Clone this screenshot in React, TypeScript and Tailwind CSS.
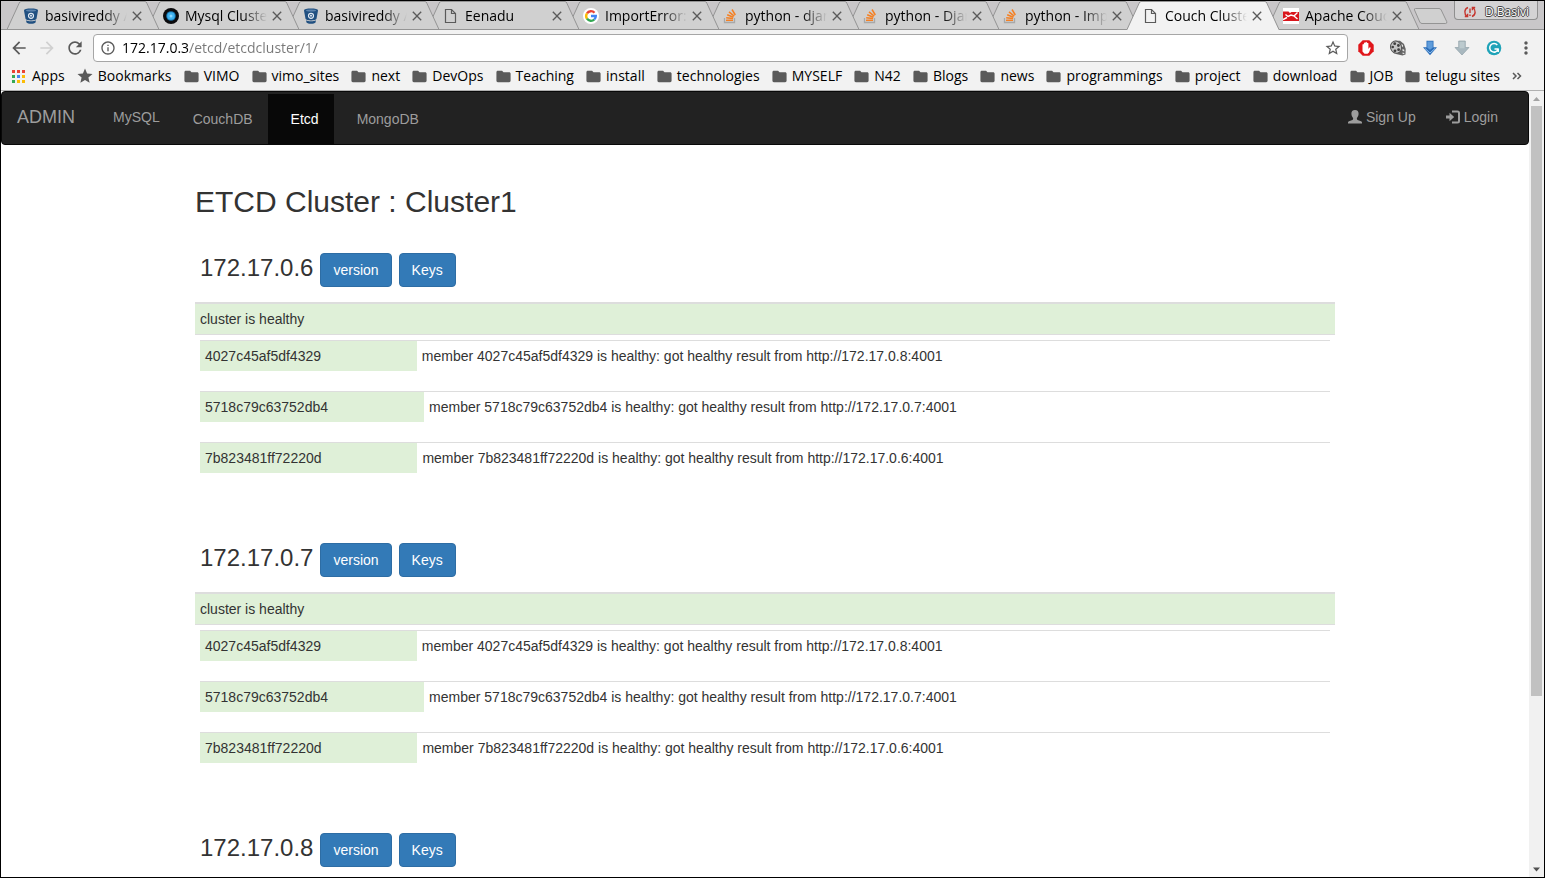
import React from "react";
import {
  MdArrowBack,
  MdArrowForward,
  MdClose,
  MdFolder,
  MdInfoOutline,
  MdMoreVert,
  MdRefresh,
  MdStar,
  MdStarBorder,
} from "react-icons/md";

type IconKind = "bitbucket" | "mysql" | "page" | "google" | "stack" | "couch";

const tabs: { title: string; icon: IconKind; active?: boolean }[] = [
  { title: "basivireddy /", icon: "bitbucket" },
  { title: "Mysql Cluste", icon: "mysql" },
  { title: "basivireddy /", icon: "bitbucket" },
  { title: "Eenadu", icon: "page" },
  { title: "ImportError:", icon: "google" },
  { title: "python - djan", icon: "stack" },
  { title: "python - Djan", icon: "stack" },
  { title: "python - Imp", icon: "stack" },
  { title: "Couch Cluste", icon: "page", active: true },
  { title: "Apache Couc", icon: "couch" },
];

const folders = [
  "VIMO", "vimo_sites", "next", "DevOps", "Teaching", "install", "technologies", "MYSELF",
  "N42", "Blogs", "news", "programmings", "project", "download", "JOB", "telugu sites",
];

const members = [
  { id: "4027c45af5df4329", host: "172.17.0.8" },
  { id: "5718c79c63752db4", host: "172.17.0.7" },
  { id: "7b823481ff72220d", host: "172.17.0.6" },
];

const nodes = ["172.17.0.6", "172.17.0.7", "172.17.0.8"];

function Favicon({ kind }: { kind: IconKind }) {
  switch (kind) {
    case "bitbucket":
      return (
        <svg viewBox="0 0 16 16" className="size-4">
          <path d="M1 2.600C1 1.200 4 .6 8 .6s7 .6 7 2l-1.500 8.200c-.4 1-2.600 1.600-5.500 1.600S2.900 11.800 2.500 10.800z" fill="#205081" />
          <ellipse cx="8" cy="2.500" rx="5" ry="1" fill="#5d84ad" />
          <path d="M3 12.200c1.200.8 3 1.100 5 1.100s3.800-.3 5-1.100l-.5 2.300c-.7.9-2.500 1.300-4.500 1.300s-3.800-.4-4.500-1.300z" fill="#205081" />
          <circle cx="8" cy="7.800" r="2.500" fill="none" stroke="#dfe8f2" strokeWidth="1.200" />
          <circle cx="8" cy="7.800" r="1" fill="#dfe8f2" />
        </svg>
      );
    case "mysql":
      return (
        <svg viewBox="0 0 16 16" className="size-4">
          <circle cx="8" cy="8" r="8" fill="#0b0b0d" />
          <circle cx="8" cy="8" r="4.800" fill="#1a75ad" />
          <circle cx="8" cy="8" r="3.800" fill="#3fb2f0" />
          <circle cx="8" cy="8" r="1.500" fill="#8ad8ff" />
        </svg>
      );
    case "page":
      return (
        <svg viewBox="0 0 16 16" className="size-4" fill="none" stroke="#5a5a5a" strokeWidth="1.200">
          <path d="M2.500 1.500h6L12.500 5.500v9h-10z" />
          <path d="M8.500 1.500v4h4" />
        </svg>
      );
    case "google":
      return (
        <svg viewBox="0 0 16 16" className="size-4">
          <circle cx="8" cy="8" r="8" fill="#fff" />
          <g fill="none" strokeWidth="2.400">
            <path d="M4 5.300A4.800 4.800 0 0 1 11.500 4.700" stroke="#ea4335" />
            <path d="M4 10.700A4.800 4.800 0 0 1 4 5.300" stroke="#fbbc05" />
            <path d="M11.300 11.500A4.800 4.800 0 0 1 4 10.700" stroke="#34a853" />
            <path d="M8 8h4.800a4.800 4.800 0 0 1-1.500 3.500" stroke="#4285f4" />
          </g>
        </svg>
      );
    case "stack":
      return (
        <svg viewBox="0 0 16 16" className="size-4" fill="none">
          <path d="M1.500 10v4.500h10V10" stroke="#a8a8a8" strokeWidth="1.300" />
          <g stroke="#f48024" strokeWidth="1.500">
            <path d="M3 12.300h7" />
            <path d="M3.200 9.700l6.900.9" />
            <path d="M4.200 6.800l6.200 2.500" />
            <path d="M6 3.900l5.200 4.200" />
            <path d="M9 1.500l3.300 5.500" />
          </g>
        </svg>
      );
    default:
      return (
        <svg viewBox="0 0 16 16" className="size-4">
          <path d="M0 0h16v16H0z" fill="#fff" />
          <path d="M0 3.500h5.500l1.500 1.500 1.500-1H16V13H0z" fill="#d9161c" />
          <path d="M2.500 6.500l2.500 2 3-1.500 3 1 3.500-3.500M0 11.500l4-2M11 8l3.500 3" stroke="#fff" strokeWidth="1.400" fill="none" />
        </svg>
      );
  }
}

function Tab({ title, icon, active, order }: { title: string; icon: IconKind; active?: boolean; order: number }) {
  return (
    <div className="relative -ml-3 h-[29px] w-[152px]" style={{ zIndex: order }}>
      <svg viewBox="0 0 152 29" preserveAspectRatio="none" className="absolute inset-0 size-full">
        <path d="M0 29L12 2.500Q12.500 1 14 1H138Q139.500 1 140 2.500L152 29z" fill={active ? "#f2f2f2" : "#d0d0d0"} />
        <path
          d={active
            ? "M0 28.500L12 2.500Q12.500.5 14 .5H138Q139.500.5 140 2.500L152 28.500"
            : "M0 28.500L12 2.500Q12.500.5 14 .5H138Q139.500.5 140 2.500L152 28.500z"}
          fill="none"
          stroke="#949494"
        />
      </svg>
      <div className="relative flex h-full items-center pr-3.5 pl-4">
        <Favicon kind={icon} />
        <span className="ml-1.5 min-w-0 flex-1 overflow-hidden text-sm leading-5 whitespace-nowrap [mask-image:linear-gradient(to_right,#000_70%,transparent)]">
          {title}
        </span>
        <button type="button" aria-label="Close tab" className="ml-0.5 text-[#5a5a5a]">
          <MdClose className="size-4" />
        </button>
      </div>
    </div>
  );
}

function TabStrip() {
  return (
    <div className="flex h-[29px] items-start bg-[#c9c7c9] pl-[18px] shadow-[inset_0_-1px_0_#949494]">
      {tabs.map((tab, i) => (
        <Tab key={i} {...tab} order={tab.active ? 20 : tabs.length - i} />
      ))}
      <button type="button" aria-label="New tab" className="mt-1.5 -ml-1.5">
        <svg viewBox="0 0 36 18" className="h-[18px] w-9">
          <path d="M2.500 1.500H26q1.500 0 2.200 1.500l5.500 11.500q.6 2-1 2H9q-1.500 0-2.200-1.500L1.500 3q-.5-1.500 1-1.500z" fill="#d0d0d0" stroke="#949494" />
        </svg>
      </button>
      <button
        type="button"
        className="mr-1.5 ml-auto flex h-[19px] items-center gap-2 rounded-b border border-t-0 border-[#8f8f8f] bg-[#d4d3d4] px-2 pt-1 text-xs leading-4"
      >
        <svg viewBox="0 0 14 14" className="size-3.5" fill="none" stroke="#c5362e" strokeWidth="1.400">
          <path d="M5 2.500C1 4 1 9 4 11.500M1.800 11.500H4.600V8.800M9 11.500c4-1.500 4-6.500 1-9M12.200 2.500H9.400v2.700M7 3.500v4.500M7 9.500V11" />
        </svg>
        <span className="text-white [text-shadow:1px_0_#444,-1px_0_#444,0_1px_#444,0_-1px_#444]">D.Basivi</span>
      </button>
    </div>
  );
}

function Extensions() {
  return (
    <div className="flex items-center gap-4">
      <button type="button" aria-label="Ad blocker">
        <svg viewBox="0 0 16 16" className="size-4">
          <path d="M4.700.3h6.600l4.400 4.400v6.600l-4.400 4.400H4.700L.3 11.300V4.700z" fill="#e0161b" />
          <path d="M4.500 8V4.500q.8-1 1.400 0V3q.8-1 1.500 0v-.7q.8-.9 1.500 0V3.200q.8-.9 1.500 0V9l1-1.500q1-.5 1.300.4L11 12.500l-1.500 1.200h-3L4.500 11.500z" fill="#fff" />
        </svg>
      </button>
      <button type="button" aria-label="Video downloader">
        <svg viewBox="0 0 16 16" className="size-4">
          <path d="M5 .8h5l4 3.200 1.700 5-.2 5.500-3 1L6 14z" fill="#666" />
          <path d="M11.500 4l1.500 1v2l-1.500-.8zM12.500 9l1.800.8v1.700l-1.800-.8zM12.500 12.500l1.800.6v1.200l-1.800-.5z" fill="#e4e4e4" />
          <ellipse cx="6" cy="7.200" rx="5.400" ry="6.200" fill="#c4c4c4" stroke="#555" transform="rotate(-18 6 7.200)" />
          <g fill="#3e3e3e">
            <circle cx="4.700" cy="3.700" r="1.400" />
            <circle cx="2.700" cy="7" r="1.300" />
            <circle cx="8.400" cy="5.500" r="1.400" />
            <circle cx="5" cy="10.800" r="1.400" />
            <circle cx="8.600" cy="9.700" r="1.400" />
          </g>
        </svg>
      </button>
      <button type="button" aria-label="Download">
        <svg viewBox="0 0 16 16" className="size-4">
          <path d="M4.500.8h7v6.500H15L8 15.200 1 7.300h3.500z" fill="#2b6db8" />
          <path d="M5.300 1.500h5.400v6.300l-2.700 2-2.700-2z" fill="#5f9cdb" />
          <path d="M3 8.500l5 4.500 5-4.500" stroke="#8fc0ee" fill="none" />
        </svg>
      </button>
      <button type="button" aria-label="Download all">
        <svg viewBox="0 0 16 16" className="size-4">
          <path d="M4.700 1h6.600v6.500H15L8 15 1 7.500h3.700z" fill="#a9b8bf" stroke="#8fa0a8" strokeWidth=".7" />
          <path d="M5.500 1.800h5v6.500h-5z" fill="#bccace" />
        </svg>
      </button>
      <button type="button" aria-label="Grammar checker">
        <svg viewBox="0 0 16 16" className="size-4">
          <circle cx="8" cy="8" r="7.300" fill="#1fa3b8" />
          <path d="M11.300 5A4.300 4.300 0 1 0 12 9.500M8.500 9H12.500M12.200 8.500v3.500" stroke="#fff" strokeWidth="1.500" fill="none" />
        </svg>
      </button>
      <button type="button" aria-label="Menu" className="-ml-0.5 text-[#5a5a5a]">
        <MdMoreVert className="size-5" />
      </button>
    </div>
  );
}

function Toolbar() {
  return (
    <div className="flex h-9 items-center pr-2 pl-2 text-[#5a5a5a]">
      <button type="button" aria-label="Back"><MdArrowBack className="size-5" /></button>
      <button type="button" aria-label="Forward" className="ml-2 text-[#d0d0d0]"><MdArrowForward className="size-5" /></button>
      <button type="button" aria-label="Reload" className="ml-2"><MdRefresh className="size-5" /></button>
      <div className="mr-2.5 ml-2 flex h-7 min-w-0 flex-1 items-center rounded-sm border border-[#a6a6a6] bg-white pr-[5px] pl-1.5">
        <MdInfoOutline className="size-4" />
        <input
          type="text"
          aria-label="Address"
          defaultValue="172.17.0.3/etcd/etcdcluster/1/"
          className="ml-1.5 min-w-0 flex-1 bg-[linear-gradient(to_right,#000_66px,#777_66px)] bg-clip-text text-sm leading-5 text-transparent outline-none"
        />
        <button type="button" aria-label="Bookmark this page"><MdStarBorder className="size-[18px]" /></button>
      </div>
      <Extensions />
    </div>
  );
}

function BookmarksBar() {
  const dots = ["#ea4335", "#ea4335", "#ea4335", "#34a853", "#4285f4", "#fbbc05", "#34a853", "#fbbc05", "#fbbc05"];
  return (
    <nav aria-label="Bookmarks" className="flex h-6 items-center pr-[22px] pb-1 pl-2.5 text-sm leading-5 whitespace-nowrap">
      <div className="flex min-w-0 flex-1 items-center justify-between">
        <a href="#apps" className="flex items-center gap-1.5">
          <svg viewBox="0 0 15 15" className="size-[15px]">
            {dots.map((color, i) => (
              <rect key={i} x={1 + (i % 3) * 5} y={1 + Math.floor(i / 3) * 5} width="3" height="3" fill={color} />
            ))}
          </svg>
          Apps
        </a>
        <a href="#bookmarks" className="flex items-center gap-1">
          <MdStar className="size-[18px] text-[#5a5a5a]" />
          Bookmarks
        </a>
        {folders.map((name) => (
          <a key={name} href={"#" + name} className="flex items-center gap-1">
            <MdFolder className="size-[17px] text-[#5a5a5a]" />
            {name}
          </a>
        ))}
      </div>
      <button type="button" aria-label="More bookmarks" className="ml-3 text-[#5a5a5a]">
        <svg viewBox="0 0 10 10" className="size-2.5" fill="none" stroke="currentColor" strokeWidth="1.500">
          <path d="M1 2l3 3-3 3M5.500 2l3 3-3 3" />
        </svg>
      </button>
    </nav>
  );
}

function Navbar() {
  return (
    <nav className="flex h-[54px] items-start rounded border border-[#080808] bg-[#222] text-sm leading-5 text-[#9d9d9d]">
      <a href="#admin" className="p-[15px] text-lg leading-5">ADMIN</a>
      <a href="#mysql" className="py-[15px] pl-[23px]">MySQL</a>
      <div className="ml-2.5 flex pt-0.5">
        <a href="#couchdb" className="py-[15px] pr-[15px] pl-[23px]">CouchDB</a>
        <a href="#etcd" className="bg-[#080808] py-[15px] pr-[15px] pl-[23px] text-white">Etcd</a>
        <a href="#mongodb" className="py-[15px] pr-[15px] pl-[23px]">MongoDB</a>
      </div>
      <div className="mr-[15px] ml-auto flex">
        <a href="#signup" className="flex items-center gap-1 p-[15px]">
          <svg viewBox="0 0 14 14" className="size-3.5" fill="currentColor">
            <path d="M7 0C9.500 0 10.700 1.500 10.600 3.700 10.500 5.800 9.700 7.100 8.900 8v1.100c0 .5.300.8.700 1L13 11.200c.7.300 1 .7 1 1.400v.9H0V12.600c0-.7.3-1.100 1-1.400l3.400-1.100c.4-.2.700-.5.700-1V8C4.300 7.100 3.500 5.800 3.400 3.700 3.300 1.500 4.500 0 7 0z" />
          </svg>
          Sign Up
        </a>
        <a href="#login" className="flex items-center gap-1 p-[15px]">
          <svg viewBox="0 0 14 14" className="size-3.5">
            <path d="M0 5.500h3.500V2.800L8.200 7l-4.700 4.200V8.500H0z" fill="currentColor" />
            <path d="M6 1.500h5.500q1.500 0 1.500 1.500v8q0 1.500-1.500 1.500H6" fill="none" stroke="currentColor" strokeWidth="2" />
          </svg>
          Login
        </a>
      </div>
    </nav>
  );
}

function ClusterNode({ ip }: { ip: string }) {
  const button = "h-[34px] rounded border border-[#2e6da4] bg-[#337ab7] px-3 text-sm leading-5 text-white";
  return (
    <section className="mb-[45px]">
      <div className="flex items-start gap-[7px] pl-[5px]">
        <h3 className="text-2xl leading-[30px]">{ip}</h3>
        <button type="button" className={button}>version</button>
        <button type="button" className={button}>Keys</button>
      </div>
      <p className="mt-[15px] border-t-2 border-b border-[#ddd] bg-[#dff0d8] p-[5px]">cluster is healthy</p>
      <div className="p-[5px]">
        {members.map((m) => (
          <table key={m.id} className="mb-5 w-full border-collapse">
            <tbody>
              <tr className="border-t border-[#ddd]">
                <td className="bg-[#dff0d8] p-[5px]">{m.id}</td>
                <td className="p-[5px]">
                  member {m.id} is healthy: got healthy result from http://{m.host}:4001
                </td>
              </tr>
            </tbody>
          </table>
        ))}
      </div>
    </section>
  );
}

function Scrollbar() {
  return (
    <div aria-hidden="true" className="flex w-[15px] shrink-0 flex-col items-center bg-[#f1f1f1]">
      <svg viewBox="0 0 15 15" className="size-[15px] shrink-0"><path d="M4 10l3.500-4L11 10z" fill="#a3a3a3" /></svg>
      <div className="h-[590px] w-[11px] bg-[#c1c1c1]" />
      <svg viewBox="0 0 15 15" className="mt-auto size-[15px] shrink-0"><path d="M4 5.500l3.500 4L11 5.500z" fill="#505050" /></svg>
    </div>
  );
}

export default function App() {
  return (
    <div className="flex h-screen flex-col overflow-hidden border border-black bg-white">
      <header className="shrink-0 border-b border-[#b0b0b0] bg-[#f2f2f2] font-['Open_Sans','Noto_Sans',sans-serif] text-black">
        <TabStrip />
        <Toolbar />
        <BookmarksBar />
      </header>
      <div className="flex min-h-0 flex-1 font-['Liberation_Sans',Arial,sans-serif] text-sm leading-5 text-[#333]">
        <div className="min-w-0 flex-1 overflow-hidden">
          <Navbar />
          <main className="mx-auto mt-10 max-w-[1140px]">
            <h2 className="mb-[35px] text-3xl leading-[33px]">ETCD Cluster : Cluster1</h2>
            {nodes.map((ip) => (
              <ClusterNode key={ip} ip={ip} />
            ))}
          </main>
        </div>
        <Scrollbar />
      </div>
    </div>
  );
}
